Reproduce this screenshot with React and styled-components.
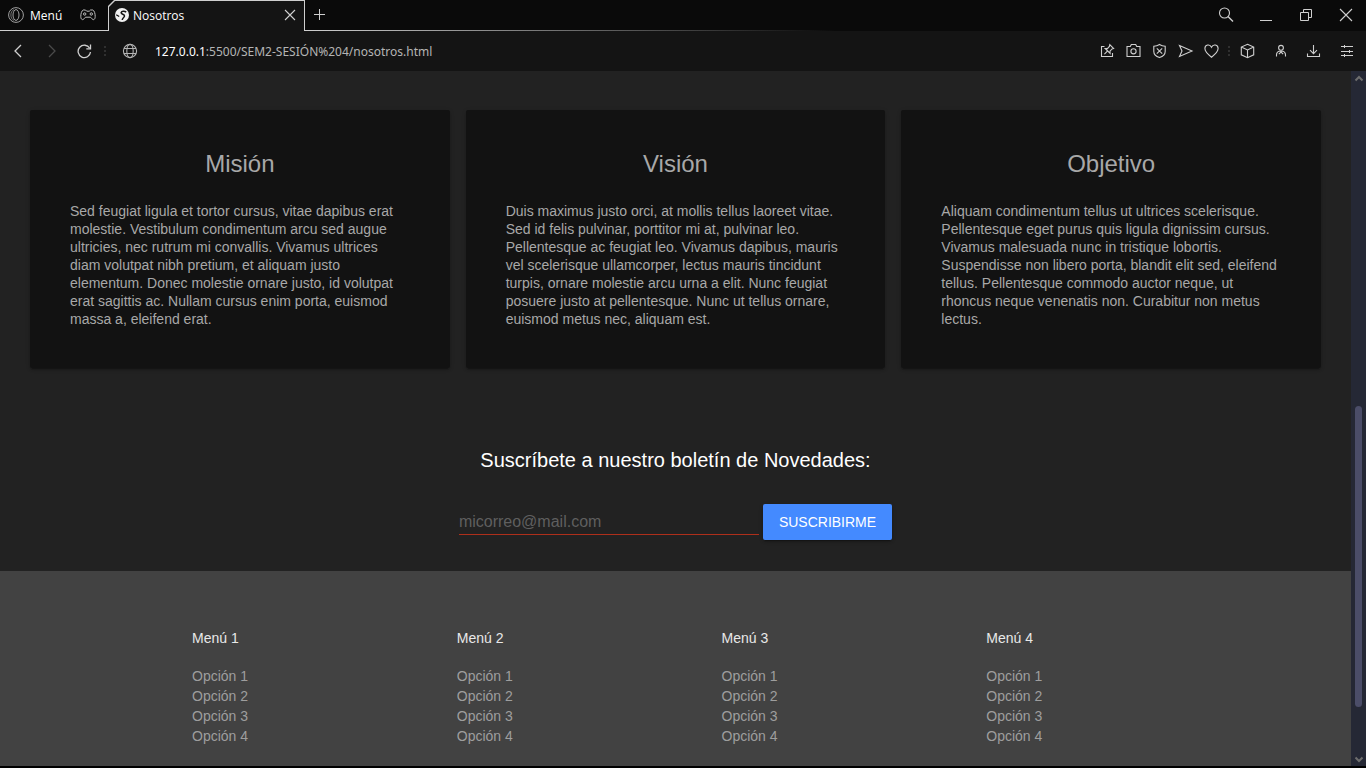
import React from "react";
import styled, { createGlobalStyle } from "styled-components";

const GlobalStyle = createGlobalStyle`
  *, *::before, *::after { box-sizing: border-box; }
  body {
    margin: 0;
    background: #000;
    font-family: "Liberation Sans", Arial, sans-serif;
  }
  h2, h3, p, ul { margin: 0; padding: 0; }
  ul { list-style: none; }
  button { border: 0; background: none; padding: 0; color: inherit; font: inherit; cursor: pointer; }
  a { color: inherit; text-decoration: none; }
`;

const Shell = styled.div`
  min-height: 100vh;
  display: flex;
  flex-direction: column;
  padding-bottom: 2px;
`;

const Chrome = styled.header`
  font-family: "Open Sans", "Noto Sans", sans-serif;
  font-size: 12px;
  color: #d8d8d8;
`;

const TabStrip = styled.div`
  display: flex;
  height: 31px;
  background: #0a0a0a;
`;

const StripStart = styled.div`
  display: flex;
  align-items: center;
  justify-content: space-between;
  width: 108px;
  padding: 0 12px 0 8px;
  border-bottom: 1px solid #cfcfcf;
`;

const MenuButton = styled.button`
  display: flex;
  align-items: center;
  gap: 6px;
  color: #fff;
`;

const TabOutline = styled.div`
  width: 197px;
  padding: 1px 1px 0;
  background: #cfcfcf;
  clip-path: polygon(6px 0, 100% 0, 100% 100%, 0 100%, 0 6px);
`;

const Tab = styled.div`
  display: flex;
  align-items: center;
  gap: 4px;
  height: 100%;
  padding: 0 6px 2px 6px;
  background: #141414;
  color: #fff;
  clip-path: polygon(6px 0, 100% 0, 100% 100%, 0 100%, 0 6px);
`;

const TabTitle = styled.span`
  flex: 1;
`;

const StripEnd = styled.div`
  flex: 1;
  display: flex;
  justify-content: space-between;
  align-items: center;
  padding: 0 12px 2px 7px;
  background: linear-gradient(90deg, #cfcfcf, #0a0a0a 50%) bottom / 100% 1px no-repeat;
`;

const WindowControls = styled.div`
  display: flex;
  gap: 24px;
`;

const IconButton = styled.button`
  display: flex;
  align-items: center;
  justify-content: center;
  width: 16px;
  height: 16px;
  color: ${(p) => (p.$dim ? "#4a4a4a" : "#cfcfcf")};
`;

const Toolbar = styled.div`
  display: flex;
  align-items: center;
  height: 40px;
  padding: 0 11px 0 10px;
  background: #141414;
`;

const NavGroup = styled.div`
  display: flex;
  align-items: center;
  gap: 17px;
`;

const Dots = styled.span`
  width: 2px;
  height: 10px;
  margin: 0 ${(p) => p.$after}px 0 ${(p) => p.$before}px;
  background: repeating-linear-gradient(#303030 0 2px, transparent 2px 4px);
`;

const Address = styled.div`
  flex: 1;
  display: flex;
  align-items: center;
  gap: 17px;
  color: #b4b4b4;
`;

const Url = styled.span`
  font-family: "Noto Sans", "Open Sans", sans-serif;
`;

const Host = styled.span`
  color: #fff;
`;

const PageActions = styled.div`
  display: flex;
  gap: 10px;
`;

const BrowserActions = styled.div`
  display: flex;
  gap: 17px;
`;

const Viewport = styled.div`
  flex: 1;
  display: flex;
`;

const Page = styled.div`
  flex: 1;
  min-width: 0;
  display: flex;
  flex-direction: column;
  background: #222;
`;

const CardGrid = styled.section`
  display: grid;
  grid-template-columns: repeat(3, 1fr);
  gap: 16px;
  padding: 39px 30px 80px;
`;

const Card = styled.article`
  padding: 40px;
  border-radius: 2px;
  background: #121212;
  color: #a8a8a8;
  box-shadow: 0 2px 2px rgba(0, 0, 0, 0.14), 0 3px 1px -2px rgba(0, 0, 0, 0.2),
    0 1px 5px rgba(0, 0, 0, 0.12);
`;

const CardTitle = styled.h2`
  margin-bottom: 24px;
  font-size: 24px;
  font-weight: 400;
  line-height: 28px;
  text-align: center;
`;

const CardText = styled.p`
  font-size: 14px;
  line-height: 18px;
`;

const Newsletter = styled.form`
  display: flex;
  flex-direction: column;
  align-items: center;
  gap: 32px;
  padding-bottom: 31px;
`;

const NewsletterLabel = styled.label`
  color: #fff;
  font-size: 20px;
  line-height: 24px;
`;

const Field = styled.div`
  display: flex;
  gap: 4px;
`;

const MailInput = styled.input`
  width: 300px;
  height: 31px;
  padding: 8px 0 2px;
  border: 0;
  border-bottom: 1px solid #ae2f1b;
  border-radius: 0;
  outline: 0;
  background: none;
  color: #fff;
  font: 16px "Liberation Sans", Arial, sans-serif;
  &::placeholder { color: #5f5f5f; opacity: 1; }
`;

const SubmitButton = styled.button`
  height: 36px;
  padding: 0 16px;
  border-radius: 2px;
  background: #448aff;
  color: #fff;
  font-size: 14px;
  text-transform: uppercase;
  box-shadow: 0 2px 2px rgba(0, 0, 0, 0.14), 0 3px 1px -2px rgba(0, 0, 0, 0.2),
    0 1px 5px rgba(0, 0, 0, 0.12);
`;

const Footer = styled.footer`
  flex: 1;
  display: grid;
  grid-template-columns: repeat(4, 1fr);
  padding: 57px 100px 20px 192px;
  background: #424242;
  font-size: 14px;
  line-height: 20px;
`;

const FooterTitle = styled.h3`
  margin-bottom: 18px;
  color: #e8e8e8;
  font-size: 14px;
  font-weight: 400;
`;

const FooterLinks = styled.ul`
  color: #9e9e9e;
`;

const ScrollTrack = styled.div`
  display: flex;
  flex-direction: column;
  align-items: center;
  width: 15px;
  background: #252835;
  color: #6d6d6d;
`;

const ScrollArrow = styled.button`
  display: flex;
  align-items: center;
  justify-content: center;
  width: 15px;
  height: 15px;
`;

const ScrollSpace = styled.div`
  flex: ${(p) => p.$share};
`;

const ScrollThumb = styled.div`
  flex: 301;
  width: 7px;
  border-radius: 4px;
  background: #4b4d68;
`;

const Svg = styled.svg`
  display: block;
  flex: none;
  fill: none;
  stroke: currentColor;
  stroke-width: 1.1;
`;

const Icon = ({ size = 16, children }) => (
  <Svg width={size} height={size} viewBox={`0 0 ${size} ${size}`} aria-hidden="true">
    {children}
  </Svg>
);

const OperaIcon = () => (
  <Icon>
    <g stroke="#a0a0a0" strokeWidth="1">
      <circle cx="8" cy="8" r="7.4" />
      <ellipse cx="8" cy="8" rx="3" ry="5.400" />
      <path d="M6 2.600C3.800 3.600 2.900 5.600 2.900 8s.9 4.400 3.100 5.400" opacity=".7" />
    </g>
  </Icon>
);
const GamepadIcon = () => (
  <Icon>
    <g stroke="#bdbdbd" strokeWidth="1">
      <path d="M3.200 3h2.300l1.200 1.200h2.600L10.500 3h2.300c1.600.8 2.400 3.600 2.400 6.500 0 3-1.800 4-3.200 2.300L10.500 10.200h-5L4 11.800C2.600 13.500.8 12.500.8 9.500.8 6.600 1.600 3.800 3.200 3z" />
      <circle cx="4.700" cy="7" r="1.200" />
      <circle cx="11.300" cy="7" r="1.200" />
    </g>
  </Icon>
);
const EarthIcon = () => (
  <Icon size={14}>
    <circle cx="7" cy="7" r="7" fill="#f1f1f1" stroke="none" />
    <path d="M11.200 4.200C9.500 2.800 6.600 3.200 6.100 4.700c.2 1.800 3.500 1.200 3.400 3.300-.2 1.600-1.900 1.400-2.300 4" stroke="#141414" strokeWidth="1.500" />
    <path d="M1.200 6.800l3 1.700" stroke="#141414" strokeWidth="1.300" />
  </Icon>
);
const CloseIcon = ({ r = 5 }) => (
  <Icon>
    <path d={`M${8 - r} ${8 - r}L${8 + r} ${8 + r}M${8 + r} ${8 - r}L${8 - r} ${8 + r}`} />
  </Icon>
);
const PlusIcon = () => (
  <Icon><path d="M7.500 2v11M2 7.500h11" stroke="#cfcfcf" strokeWidth="1" /></Icon>
);
const SearchIcon = () => (
  <Icon><circle cx="6.500" cy="6" r="5" /><path d="M10 9.500l5 5" strokeWidth="1.400" /></Icon>
);
const MinimizeIcon = () => (
  <Icon><path d="M2 13.500h12" strokeWidth="1" /></Icon>
);
const RestoreIcon = () => (
  <Icon><path d="M2.500 5.500h8v8h-8zM5.500 5.500v-3h8v8h-3" strokeWidth="1" /></Icon>
);
const BackIcon = () => (
  <Icon><path d="M11 2L5 8l6 6" strokeWidth="1.300" /></Icon>
);
const ForwardIcon = () => (
  <Icon><path d="M6 2l6 6-6 6" strokeWidth="1.300" /></Icon>
);
const ReloadIcon = () => (
  <Icon>
    <path d="M13.700 5.300A6.200 6.200 0 1 0 14.500 9" strokeWidth="1.300" />
    <path d="M14.500 1.600v4.200h-4.200" strokeWidth="1.300" />
  </Icon>
);
const GlobeIcon = () => (
  <Icon>
    <circle cx="8" cy="8" r="6.600" />
    <ellipse cx="8" cy="8" rx="3.200" ry="6.600" />
    <path d="M2 5.500h12M2 10.500h12" />
  </Icon>
);
const PinNoteIcon = () => (
  <Icon>
    <path d="M4.500 3.500h-3v10h11V10" />
    <path d="M9.800 1.700l3.800 3.800-1.600.5-2 2.200.1 2.200-4.900-4.900 2.200.1 2-2.200zM7.400 8.100l-3 3" />
  </Icon>
);
const CameraIcon = () => (
  <Icon>
    <path d="M1 3.500h3.300l1-2h4.400l1 2H14v10H1z" />
    <circle cx="7.500" cy="8.300" r="2.600" />
  </Icon>
);
const ShieldIcon = () => (
  <Icon>
    <path d="M7.500 1.500c1.800 1.100 3.600 1.600 5.700 1.700v5.200c0 3-2.300 4.900-5.700 6.200-3.400-1.300-5.700-3.200-5.700-6.200V3.200c2.100-.1 3.900-.6 5.700-1.700z" />
    <path d="M4.800 5.300l5.400 5.400M10.200 5.300l-5.400 5.400" />
  </Icon>
);
const SendIcon = () => (
  <Icon><path d="M1.500 2.500L14 8 1.500 13.500 4 8z" /></Icon>
);
const HeartIcon = () => (
  <Icon><path d="M7.500 14.200C4 11.500.9 8.700.9 5.600c0-3.900 4.900-5.100 6.600-1.400 1.700-3.700 6.600-2.500 6.600 1.400 0 3.100-3.100 5.900-6.600 8.600z" /></Icon>
);
const CubeIcon = () => (
  <Icon><path d="M7.500 1.300l6.200 2.800v7.700l-6.200 2.900-6.200-2.900V4.100zM1.300 4.100L7.500 7l6.200-2.900M7.500 7v7.700" /></Icon>
);
const UserIcon = () => (
  <Icon>
    <circle cx="8" cy="4.800" r="2.400" />
    <path d="M3.500 13.500V12c0-2.500 2-4 4.500-4s4.500 1.500 4.500 4v1.500M5.800 11.200L8 9l2.200 2.200" />
  </Icon>
);
const DownloadIcon = () => (
  <Icon><path d="M7.500 2v8.500M4 7.200l3.500 3.500L11 7.200M1.500 10.500v3h12v-3" /></Icon>
);
const SlidersIcon = () => (
  <Icon><path d="M2 3.500h12M2 8.500h12M2 12.500h12M5.500 2v3M10.500 7v3M5.500 11v3" strokeWidth="1" /></Icon>
);

const PAGE_ACTIONS = [
  ["Tablero", PinNoteIcon],
  ["Captura", CameraIcon],
  ["Bloqueador", ShieldIcon],
  ["Enviar", SendIcon],
  ["Favoritos", HeartIcon],
];
const BROWSER_ACTIONS = [
  ["Extensiones", CubeIcon],
  ["Perfil", UserIcon],
  ["Descargas", DownloadIcon],
  ["Ajustes", SlidersIcon],
];

const CARDS = [
  {
    title: "Misión",
    text: "Sed feugiat ligula et tortor cursus, vitae dapibus erat molestie. Vestibulum condimentum arcu sed augue ultricies, nec rutrum mi convallis. Vivamus ultrices diam volutpat nibh pretium, et aliquam justo elementum. Donec molestie ornare justo, id volutpat erat sagittis ac. Nullam cursus enim porta, euismod massa a, eleifend erat.",
  },
  {
    title: "Visión",
    text: "Duis maximus justo orci, at mollis tellus laoreet vitae. Sed id felis pulvinar, porttitor mi at, pulvinar leo. Pellentesque ac feugiat leo. Vivamus dapibus, mauris vel scelerisque ullamcorper, lectus mauris tincidunt turpis, ornare molestie arcu urna a elit. Nunc feugiat posuere justo at pellentesque. Nunc ut tellus ornare, euismod metus nec, aliquam est.",
  },
  {
    title: "Objetivo",
    text: "Aliquam condimentum tellus ut ultrices scelerisque. Pellentesque eget purus quis ligula dignissim cursus. Vivamus malesuada nunc in tristique lobortis. Suspendisse non libero porta, blandit elit sed, eleifend tellus. Pellentesque commodo auctor neque, ut rhoncus neque venenatis non. Curabitur non metus lectus.",
  },
];

const MENUS = [1, 2, 3, 4];
const OPTIONS = [1, 2, 3, 4];

const ActionButtons = ({ items }) =>
  items.map(([label, Glyph]) => (
    <IconButton key={label} aria-label={label}>
      <Glyph />
    </IconButton>
  ));

export default function App() {
  return (
    <Shell>
      <GlobalStyle />
      <Chrome>
        <TabStrip>
          <StripStart>
            <MenuButton><OperaIcon />Menú</MenuButton>
            <IconButton aria-label="Juegos"><GamepadIcon /></IconButton>
          </StripStart>
          <TabOutline>
            <Tab>
              <EarthIcon />
              <TabTitle>Nosotros</TabTitle>
              <IconButton aria-label="Cerrar pestaña"><CloseIcon /></IconButton>
            </Tab>
          </TabOutline>
          <StripEnd>
            <IconButton aria-label="Nueva pestaña"><PlusIcon /></IconButton>
            <WindowControls>
              <IconButton aria-label="Buscar"><SearchIcon /></IconButton>
              <IconButton aria-label="Minimizar"><MinimizeIcon /></IconButton>
              <IconButton aria-label="Restaurar"><RestoreIcon /></IconButton>
              <IconButton aria-label="Cerrar"><CloseIcon r={6} /></IconButton>
            </WindowControls>
          </StripEnd>
        </TabStrip>
        <Toolbar>
          <NavGroup>
            <IconButton aria-label="Atrás"><BackIcon /></IconButton>
            <IconButton aria-label="Adelante" $dim><ForwardIcon /></IconButton>
            <IconButton aria-label="Recargar"><ReloadIcon /></IconButton>
          </NavGroup>
          <Dots $before={12} $after={16} />
          <Address>
            <GlobeIcon />
            <Url><Host>127.0.0.1</Host>:5500/SEM2-SESIÓN%204/nosotros.html</Url>
          </Address>
          <PageActions><ActionButtons items={PAGE_ACTIONS} /></PageActions>
          <Dots $before={8} $after={10} />
          <BrowserActions><ActionButtons items={BROWSER_ACTIONS} /></BrowserActions>
        </Toolbar>
      </Chrome>
      <Viewport>
        <Page>
          <CardGrid>
            {CARDS.map((card) => (
              <Card key={card.title}>
                <CardTitle>{card.title}</CardTitle>
                <CardText>{card.text}</CardText>
              </Card>
            ))}
          </CardGrid>
          <Newsletter onSubmit={(e) => e.preventDefault()}>
            <NewsletterLabel htmlFor="mail">Suscríbete a nuestro boletín de Novedades:</NewsletterLabel>
            <Field>
              <MailInput id="mail" type="email" placeholder="micorreo@mail.com" />
              <SubmitButton type="submit">Suscribirme</SubmitButton>
            </Field>
          </Newsletter>
          <Footer>
            {MENUS.map((m) => (
              <nav key={m}>
                <FooterTitle>Menú {m}</FooterTitle>
                <FooterLinks>
                  {OPTIONS.map((o) => (
                    <li key={o}><a href="#">Opción {o}</a></li>
                  ))}
                </FooterLinks>
              </nav>
            ))}
          </Footer>
        </Page>
        <ScrollTrack>
          <ScrollArrow aria-label="Subir">
            <Icon size={10}><path d="M1.500 6.500L5 3l3.500 3.500" strokeWidth="2" /></Icon>
          </ScrollArrow>
          <ScrollSpace $share={320} />
          <ScrollThumb />
          <ScrollSpace $share={44} />
          <ScrollArrow aria-label="Bajar">
            <Icon size={10}><path d="M1.500 3.500L5 7l3.500-3.500" strokeWidth="2" /></Icon>
          </ScrollArrow>
        </ScrollTrack>
      </Viewport>
    </Shell>
  );
}
